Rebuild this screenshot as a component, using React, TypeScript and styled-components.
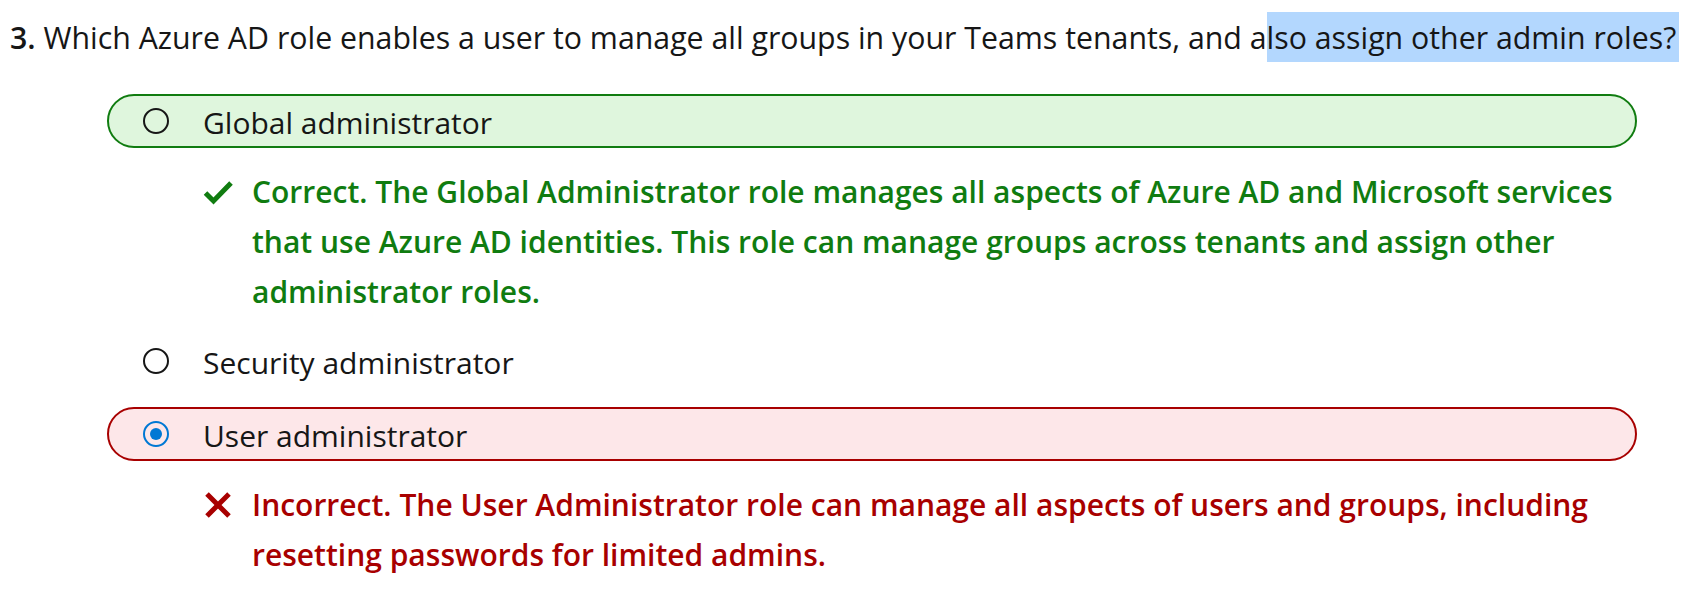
import React from "react";
import styled, { createGlobalStyle } from "styled-components";

const GlobalStyle = createGlobalStyle`
  html, body {
    margin: 0;
    padding: 0;
    background: #ffffff;
  }
  body {
    font-family: "Open Sans", "Noto Sans", "Liberation Sans", sans-serif;
    color: #161616;
  }
`;

const Page = styled.main`
  padding: 13px 0 0 10px;
  width: 1684px;
  box-sizing: border-box;
`;

const Question = styled.p`
  margin: 0;
  font-size: 30.3px;
  line-height: 50px;
  white-space: nowrap;
  color: #161616;
`;

const Number = styled.span`
  font-weight: 600;
`;

const Highlight = styled.span`
  background: #b3d7fe;
  padding: 5px 3px 4px 0;
`;

const OptionList = styled.ul`
  list-style: none;
  margin: 31px 0 0 97px;
  padding: 0;
  width: 1530px;
  display: flex;
  flex-direction: column;
  gap: 19px;
`;

const OptionItem = styled.li`
  display: flex;
  flex-direction: column;
`;

type Status = "correct" | "incorrect" | "none";

const borderFor = (s: Status) =>
  s === "correct" ? "#107c10" : s === "incorrect" ? "#a80000" : "transparent";
const bgFor = (s: Status) =>
  s === "correct" ? "#dff6dd" : s === "incorrect" ? "#fde7e9" : "transparent";

const OptionRow = styled.div<{ $status: Status }>`
  box-sizing: border-box;
  height: 54px;
  border: 2px solid ${(p) => borderFor(p.$status)};
  background: ${(p) => bgFor(p.$status)};
  border-radius: 27px;
  display: flex;
  align-items: center;
  padding-left: 34px;
  gap: 34px;
`;

const Radio = styled.span<{ $checked?: boolean }>`
  box-sizing: border-box;
  width: 26px;
  height: 26px;
  flex: 0 0 26px;
  border-radius: 50%;
  border: 2px solid ${(p) => (p.$checked ? "#0078d4" : "#161616")};
  display: flex;
  align-items: center;
  justify-content: center;
  &::after {
    content: "";
    display: ${(p) => (p.$checked ? "block" : "none")};
    width: 12px;
    height: 12px;
    border-radius: 50%;
    background: #0078d4;
  }
`;

const Label = styled.span`
  font-size: 30px;
  line-height: 50px;
  padding-top: 3px;
  color: #161616;
`;

const Feedback = styled.div<{ $status: Status }>`
  margin: 19px 0 -2px;
  padding-left: 96px;
  display: flex;
  align-items: flex-start;
  gap: 19px;
  color: ${(p) => (p.$status === "correct" ? "#107c10" : "#a80000")};
`;

const IconBox = styled.span`
  flex: 0 0 30px;
  width: 30px;
  height: 26px;
  margin-top: 12px;
  display: flex;
  align-items: center;
  justify-content: center;
`;

const FeedbackText = styled.p`
  margin: 0;
  width: 1385px;
  font-size: 30px;
  line-height: 50px;
  font-weight: 600;
`;

const CheckIcon = () => (
  <svg width="30" height="26" viewBox="0 0 30 26" aria-hidden="true">
    <polyline
      points="2.5,14 10.5,22 28,4"
      fill="none"
      stroke="#107c10"
      strokeWidth="5"
      strokeLinejoin="miter"
    />
  </svg>
);

const CrossIcon = () => (
  <svg width="28" height="26" viewBox="0 0 28 26" aria-hidden="true">
    <path
      d="M3 2 L25 24 M25 2 L3 24"
      fill="none"
      stroke="#a80000"
      strokeWidth="5"
    />
  </svg>
);

type Option = {
  label: string;
  status: Status;
  checked?: boolean;
  feedback?: string;
};

const options: Option[] = [
  {
    label: "Global administrator",
    status: "correct",
    feedback:
      "Correct. The Global Administrator role manages all aspects of Azure AD and Microsoft services that use Azure AD identities. This role can manage groups across tenants and assign other administrator roles.",
  },
  { label: "Security administrator", status: "none" },
  {
    label: "User administrator",
    status: "incorrect",
    checked: true,
    feedback:
      "Incorrect. The User Administrator role can manage all aspects of users and groups, including resetting passwords for limited admins.",
  },
];

export default function App() {
  return (
    <>
      <GlobalStyle />
      <Page>
        <Question>
          <Number>3.</Number> Which Azure AD role enables a user to manage all
          groups in your Teams tenants, and a
          <Highlight>lso assign other admin roles?</Highlight>
        </Question>
        <OptionList>
          {options.map((o) => (
            <OptionItem key={o.label}>
              <OptionRow $status={o.status}>
                <Radio $checked={o.checked} />
                <Label>{o.label}</Label>
              </OptionRow>
              {o.feedback && (
                <Feedback $status={o.status}>
                  <IconBox>
                    {o.status === "correct" ? <CheckIcon /> : <CrossIcon />}
                  </IconBox>
                  <FeedbackText>{o.feedback}</FeedbackText>
                </Feedback>
              )}
            </OptionItem>
          ))}
        </OptionList>
      </Page>
    </>
  );
}
